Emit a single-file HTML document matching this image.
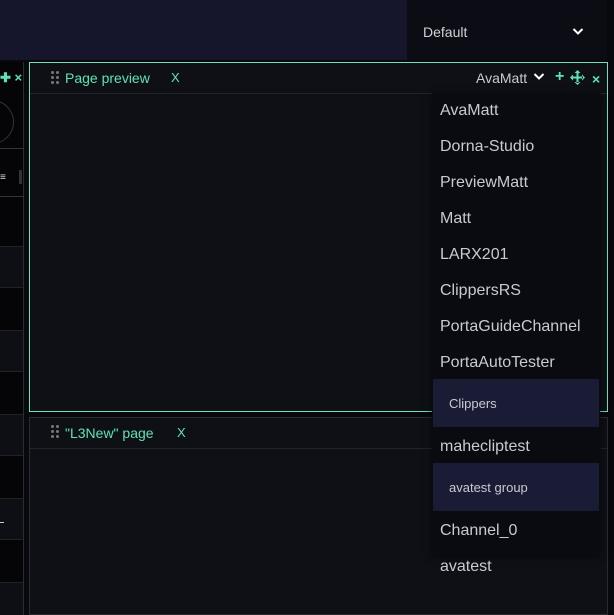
<!DOCTYPE html>
<html><head><style>
*{margin:0;padding:0;box-sizing:border-box}
body{width:614px;height:615px;background:#08090d;position:relative;overflow:hidden;font-family:"Liberation Sans",sans-serif}
.a{position:absolute}
.g{color:#5de3b6}
.dd div{position:absolute;left:8px;font-size:16px;color:#c9cad2}
.grid{display:grid;grid-template-columns:3px 3px;gap:2px}
.grid i{width:3px;height:3px;border-radius:50%;background:#777}
</style></head><body>
<div class="a" style="left:0;top:0;width:407px;height:60px;background:#15162c"></div>
<div class="a" style="left:407px;top:0;width:200px;height:60px;background:#0c0d14"></div>
<div class="a" style="left:423px;top:24px;font-size:14px;color:#d0d0d6">Default</div>
<svg class="a" style="left:572px;top:27px" width="12" height="9" viewBox="0 0 12 9"><path d="M1.5 2L6 6.5 10.5 2" stroke="#fff" stroke-width="2" fill="none"/></svg>

<div class="a" style="left:0;top:62px;width:24px;height:553px;background:#050507;border-right:1px solid #2a2b33"></div>
<div class="a g" style="left:0;top:70px;font-size:13px;font-weight:bold">✚ ×</div>
<div class="a" style="left:-30px;top:100px;width:44px;height:44px;border-radius:50%;border:1px solid #333"></div>
<div class="a" style="left:0;top:148px;width:24px;height:1px;background:#333"></div>
<div class="a" style="left:0;top:172px;color:#ddd;font-size:10px">≡</div>
<div class="a" style="left:19px;top:170px;width:3px;height:14px;background:#333"></div>
<div class="a" style="left:0;top:196px;width:24px;height:1px;background:#333"></div>
<div class="a" style="left:0;top:246px;width:23px;height:42px;background:#0e0f14;border-top:1px solid #222;border-bottom:1px solid #222"></div>
<div class="a" style="left:0;top:330px;width:23px;height:42px;background:#0e0f14;border-top:1px solid #222;border-bottom:1px solid #222"></div>
<div class="a" style="left:0;top:414px;width:23px;height:42px;background:#0e0f14;border-top:1px solid #222;border-bottom:1px solid #222"></div>
<div class="a" style="left:0;top:498px;width:23px;height:42px;background:#0e0f14;border-top:1px solid #222;border-bottom:1px solid #222"></div>
<div class="a" style="left:0;top:582px;width:23px;height:33px;background:#0e0f14;border-top:1px solid #222"></div>
<div class="a" style="left:0;top:522px;width:4px;height:1px;background:#ccc"></div>

<div class="a" style="left:29px;top:62px;width:579px;height:350px;background:#0f1016;border:1px solid #6fe0bb"></div>
<div class="a" style="left:30px;top:93px;width:577px;height:1px;background:#22232b"></div>
<div class="a grid" style="left:51px;top:71px"><i></i><i></i><i></i><i></i><i></i><i></i></div>
<div class="a g" style="left:65px;top:70px;font-size:14px">Page preview</div>
<div class="a g" style="left:171px;top:70px;font-size:13px">X</div>
<div class="a" style="left:476px;top:70px;font-size:14px;color:#c9cad2">AvaMatt</div>
<svg class="a" style="left:533px;top:72px" width="12" height="9" viewBox="0 0 12 9"><path d="M1.5 2L6 6.5 10.5 2" stroke="#fff" stroke-width="2" fill="none"/></svg>
<div class="a g" style="left:555px;top:68px;font-size:16px;font-weight:bold">+</div>
<svg class="a" style="left:570px;top:70px" width="15" height="15" viewBox="0 0 15 15" fill="#5de3b6"><path d="M6.5 2h2v11h-2zM2 6.5h11v2H2zM7.5 0l3 3h-6zM7.5 15l3-3h-6zM0 7.5l3-3v6zM15 7.5l-3-3v6z"/></svg>
<div class="a g" style="left:592px;top:71px;font-size:14px;font-weight:bold">×</div>

<div class="a" style="left:29px;top:417px;width:579px;height:198px;background:#0f1016;border:1px solid #2a2b33"></div>
<div class="a" style="left:30px;top:448px;width:577px;height:1px;background:#22232b"></div>
<div class="a grid" style="left:51px;top:425px"><i></i><i></i><i></i><i></i><i></i><i></i></div>
<div class="a g" style="left:65px;top:425px;font-size:14px">"L3New" page</div>
<div class="a g" style="left:177px;top:425px;font-size:13px">X</div>

<div class="a dd" style="left:432px;top:93px;width:168px;height:462px;background:#0a0b11;box-shadow:0 2px 8px rgba(0,0,0,.6)">
<div style="top:9px">AvaMatt</div>
<div style="top:45px">Dorna-Studio</div>
<div style="top:81px">PreviewMatt</div>
<div style="top:117px">Matt</div>
<div style="top:153px">LARX201</div>
<div style="top:189px">ClippersRS</div>
<div style="top:225px">PortaGuideChannel</div>
<div style="top:261px">PortaAutoTester</div>
<div style="top:286px;left:1px;width:166px;height:48px;background:#1a1c36"></div>
<div style="top:303px;left:17px;font-size:13px">Clippers</div>
<div style="top:345px">mahecliptest</div>
<div style="top:370px;left:1px;width:166px;height:48px;background:#1a1c36"></div>
<div style="top:387px;left:17px;font-size:13px">avatest group</div>
<div style="top:429px">Channel_0</div>
</div>
<div class="a" style="left:440px;top:558px;font-size:16px;color:#c9cad2">avatest</div>
</body></html>
